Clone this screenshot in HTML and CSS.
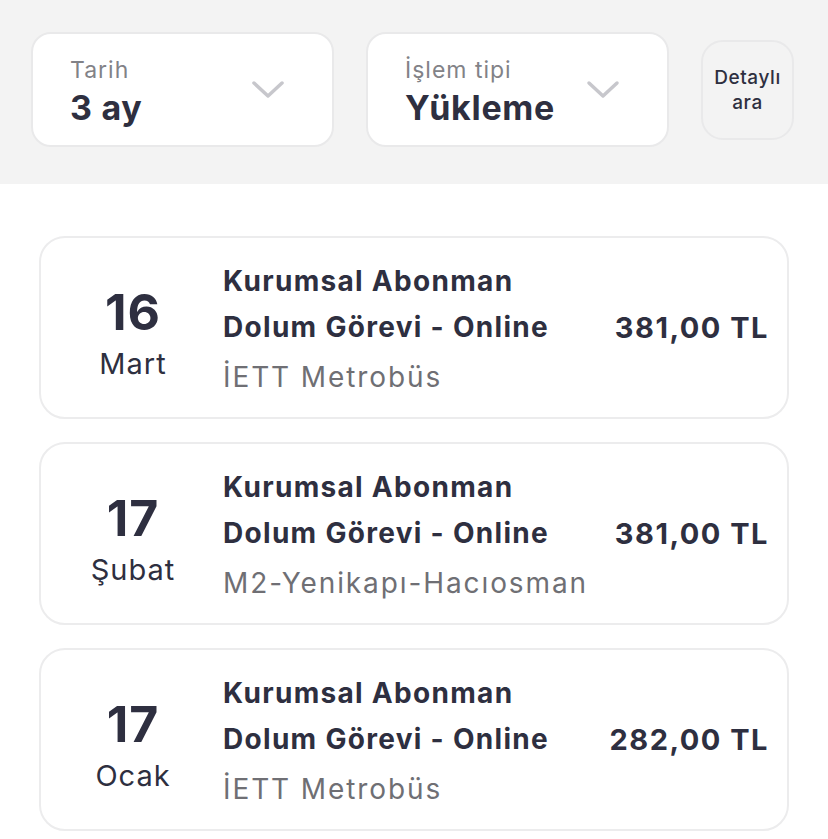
FILE: index.html
```html
<!DOCTYPE html>
<html lang="tr">
<head>
  <meta charset="UTF-8">
  <meta name="viewport" content="width=device-width, initial-scale=1.0">
  <title>Hesap Hareketleri</title>
  <link rel="stylesheet" href="styles.css">
</head>
<body>
  <div class="filter-bar">
    <div class="select-box">
      <div class="select-text">
        <span class="select-label">Tarih</span>
        <span class="select-value">3 ay</span>
      </div>
      <svg class="chevron" width="34" height="20" viewBox="0 0 34 20">
        <path d="M3 3 L17 16 L31 3" fill="none" stroke="#c7c7cc" stroke-width="3.5" stroke-linecap="round" stroke-linejoin="round"/>
      </svg>
    </div>
    <div class="select-box">
      <div class="select-text">
        <span class="select-label">İşlem tipi</span>
        <span class="select-value">Yükleme</span>
      </div>
      <svg class="chevron" width="34" height="20" viewBox="0 0 34 20">
        <path d="M3 3 L17 16 L31 3" fill="none" stroke="#c7c7cc" stroke-width="3.5" stroke-linecap="round" stroke-linejoin="round"/>
      </svg>
    </div>
    <button class="detail-button">Detaylı<br>ara</button>
  </div>

  <div class="transaction-list" id="transactions">
    <div class="transaction">
      <div class="tx-date">
        <span class="tx-day">16</span>
        <span class="tx-month">Mart</span>
      </div>
      <div class="tx-info">
        <div class="tx-title">Kurumsal Abonman<br>Dolum Görevi - Online</div>
        <div class="tx-place">İETT Metrobüs</div>
      </div>
      <div class="tx-amount">381,00 TL</div>
    </div>

    <div class="transaction">
      <div class="tx-date">
        <span class="tx-day">17</span>
        <span class="tx-month">Şubat</span>
      </div>
      <div class="tx-info">
        <div class="tx-title">Kurumsal Abonman<br>Dolum Görevi - Online</div>
        <div class="tx-place">M2-Yenikapı-Hacıosman</div>
      </div>
      <div class="tx-amount">381,00 TL</div>
    </div>

    <div class="transaction">
      <div class="tx-date">
        <span class="tx-day">17</span>
        <span class="tx-month">Ocak</span>
      </div>
      <div class="tx-info">
        <div class="tx-title">Kurumsal Abonman<br>Dolum Görevi - Online</div>
        <div class="tx-place">İETT Metrobüs</div>
      </div>
      <div class="tx-amount">282,00 TL</div>
    </div>
  </div>
</body>
</html>
```

FILE: styles.css
```css
body {
  font-family: Inter, "Noto Sans", sans-serif;
  color: #2e2f40;
  background-color: #fff;
  margin: 0;
  padding: 0;
}

.filter-bar {
  display: flex;
  align-items: center;
  gap: 32px;
  height: 184px;
  box-sizing: border-box;
  padding: 0 34px 5px 31px;
  background-color: #f3f3f3;
}

.select-box {
  flex: 1;
  display: flex;
  align-items: center;
  justify-content: space-between;
  height: 115px;
  box-sizing: border-box;
  padding: 0 47px 0 37px;
  background-color: #fff;
  border: 2px solid #e9e9ea;
  border-radius: 20px;
}

.select-text {
  display: flex;
  flex-direction: column;
  padding-top: 6px;
}

.select-label {
  font-size: 23px;
  letter-spacing: 1px;
  color: #828287;
  line-height: 30px;
}

.select-value {
  font-size: 34px;
  font-weight: 700;
  letter-spacing: 0.7px;
  line-height: 46px;
}

.chevron {
  display: block;
}

.detail-button {
  width: 93px;
  height: 100px;
  flex-shrink: 0;
  padding: 0;
  background-color: #f3f3f3;
  border: 2px solid #e9e9ea;
  border-radius: 22px;
  font-family: inherit;
  font-size: 19px;
  font-weight: 500;
  letter-spacing: 0.6px;
  line-height: 25px;
  color: #2e2f40;
}

.transaction-list {
  display: flex;
  flex-direction: column;
  gap: 23px;
  padding: 52px 39px 0 39px;
}

.transaction {
  display: flex;
  align-items: center;
  height: 183px;
  box-sizing: border-box;
  padding: 0 18px 0 18px;
  border: 2px solid #ececed;
  border-radius: 26px;
}

.tx-date {
  width: 148px;
  display: flex;
  flex-direction: column;
  align-items: center;
  margin-right: 16px;
  padding-top: 18px;
}

.tx-day {
  font-size: 50px;
  font-weight: 700;
  line-height: 54px;
  letter-spacing: 1px;
}

.tx-month {
  font-size: 29px;
  letter-spacing: 1px;
  line-height: 50px;
}

.tx-info {
  flex: 1;
  padding-top: 6px;
}

.tx-title {
  font-size: 28px;
  font-weight: 700;
  letter-spacing: 1.3px;
  line-height: 46px;
}

.tx-place {
  font-size: 28px;
  letter-spacing: 1.9px;
  line-height: 54px;
  color: #6f6f74;
}

.tx-amount {
  font-size: 29px;
  font-weight: 700;
  letter-spacing: 1.5px;
}
```
